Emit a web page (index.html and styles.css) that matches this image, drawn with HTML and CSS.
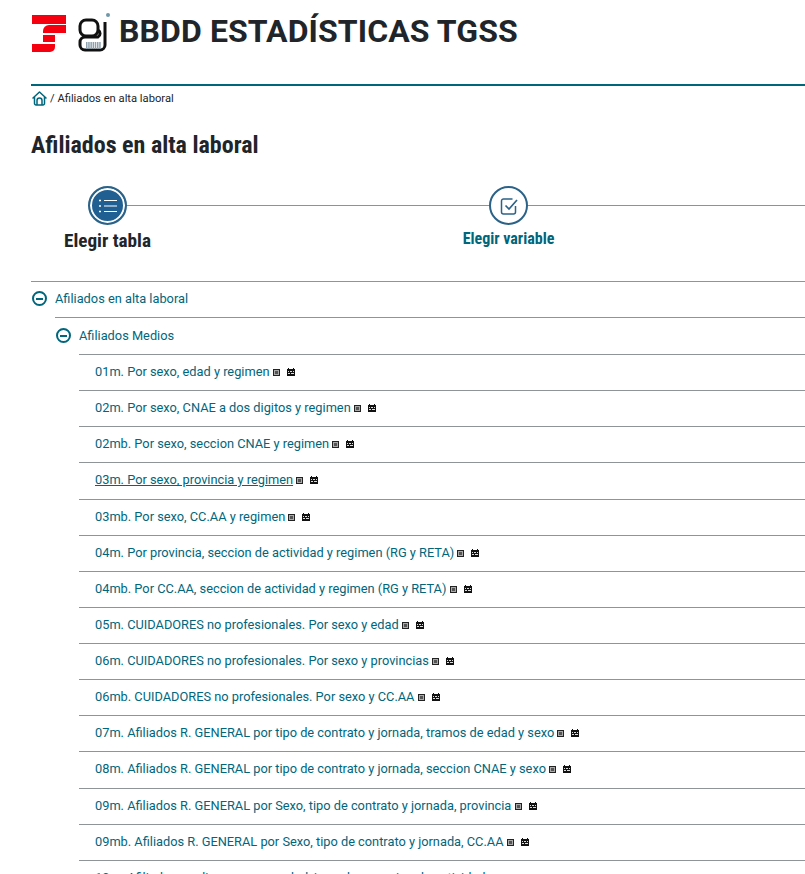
FILE: index.html
```html
<!DOCTYPE html>
<html lang="es">

<head>
  <meta charset="UTF-8">
  <meta name="viewport" content="width=device-width, initial-scale=1.0">
  <title>BBDD Estadísticas TGSS</title>
  <link rel="stylesheet" href="styles.css">
</head>

<body>
  <header class="site-header">
    <svg class="logo-ss" width="34" height="37" viewBox="0 0 34 37">
      <path fill="#f5000f" d="M0 0h34v9H0z"/>
      <path fill="#f5000f" d="M17 10h17v8H11v-2a6 6 0 0 1 6-6z"/>
      <path fill="#f5000f" d="M11 20h12v7H11z"/>
      <path fill="#f5000f" d="M0 29h23v3a5 5 0 0 1-5 5H0z"/>
    </svg>
    <svg class="logo-gi" width="32" height="40" viewBox="0 0 32 40">
      <circle cx="30" cy="3" r="2" fill="#6f97aa"/>
      <path fill="none" stroke="#111" stroke-width="3" d="M27 10v23a5 5 0 0 1-5 5H7a5 5 0 0 1-5-5v-3a5 5 0 0 1 5-5h13a4 4 0 0 0 0-7"/>
      <path fill="none" stroke="#111" stroke-width="3" d="M8 8h6a6 6 0 0 1 6 6v4a6 6 0 0 1-6 6H8a6 6 0 0 1-6-6v-4a6 6 0 0 1 6-6z"/>
      <path stroke="#8ea0ac" stroke-width="7" stroke-dasharray="1.5 .7" d="M8 33.500h15"/>
    </svg>
    <h1 class="site-title">BBDD ESTADÍSTICAS TGSS</h1>
  </header>

  <nav class="breadcrumb">
    <svg class="home-icon" width="15" height="15" viewBox="0 0 15 15">
      <path fill="none" stroke="#00667c" stroke-width="1.5" stroke-linejoin="round" stroke-linecap="round" d="M1 7 7.500 1 14 7M2.500 6v6.500a1.500 1.500 0 0 0 1.500 1.500h7a1.500 1.500 0 0 0 1.500-1.500V6M5 14V9.500a2.500 2.500 0 0 1 5 0V14"/>
    </svg>
    <span>/ Afiliados en alta laboral</span>
  </nav>

  <h2 class="page-title">Afiliados en alta laboral</h2>

  <div class="steps">
    <div class="step step-active">
      <span class="step-circle">
        <svg width="18" height="14" viewBox="0 0 18 14">
          <path fill="none" stroke="#fff" stroke-width="1.2" d="M5 1.500h13M5 7h13M5 12.500h13"/>
          <path fill="none" stroke="#fff" stroke-width="1.600" d="M0 1.500h2M0 7h2M0 12.500h2"/>
        </svg>
      </span>
      <span class="step-label">Elegir tabla</span>
    </div>
    <div class="step">
      <span class="step-circle">
        <svg width="18" height="18" viewBox="0 0 18 18">
          <path fill="none" stroke="#2b6288" stroke-width="1.500" d="M15.500 9v6a2 2 0 0 1-2 2h-10a2 2 0 0 1-2-2V4a2 2 0 0 1 2-2h9"/>
          <path fill="none" stroke="#2b6288" stroke-width="1.700" d="M5.500 8.500 9 12l8-9"/>
        </svg>
      </span>
      <span class="step-label">Elegir variable</span>
    </div>
  </div>

  <ul class="tree">
    <li class="row">
      <span class="toggle"></span>Afiliados en alta laboral
      <ul class="tree level-2">
        <li class="row">
          <span class="toggle"></span>Afiliados Medios
          <ul class="tree level-3" id="tables"></ul>
        </li>
      </ul>
    </li>
  </ul>

  <script>
    var tables = [
      '01m. Por sexo, edad y regimen',
      '02m. Por sexo, CNAE a dos digitos y regimen',
      '02mb. Por sexo, seccion CNAE y regimen',
      '03m. Por sexo, provincia y regimen',
      '03mb. Por sexo, CC.AA y regimen',
      '04m. Por provincia, seccion de actividad y regimen (RG y RETA)',
      '04mb. Por CC.AA, seccion de actividad y regimen (RG y RETA)',
      '05m. CUIDADORES no profesionales. Por sexo y edad',
      '06m. CUIDADORES no profesionales. Por sexo y provincias',
      '06mb. CUIDADORES no profesionales. Por sexo y CC.AA',
      '07m. Afiliados R. GENERAL por tipo de contrato y jornada, tramos de edad y sexo',
      '08m. Afiliados R. GENERAL por tipo de contrato y jornada, seccion CNAE y sexo',
      '09m. Afiliados R. GENERAL por Sexo, tipo de contrato y jornada, provincia',
      '09mb. Afiliados R. GENERAL por Sexo, tipo de contrato y jornada, CC.AA',
      '10m. Afiliados medios por sexo, edad, jornada y seccion de actividad'
    ];

    var tableIcon = '<svg class="mini-icon" width="7" height="7" viewBox="0 0 7 7"><path fill="#222" d="M0 0h7v7H0z"/><path fill="#aaa" d="M1 1h5v5H1z"/><path fill="#555" d="M2 2h3v3H2z"/></svg>';
    var calIcon = '<svg class="mini-icon" width="8" height="8" viewBox="0 0 8 8"><path fill="#111" d="M1 0h1v1h4V0h1v1h1v7H0V1h1z"/><path fill="#ddd" d="M1 3h1v1H1zM3 3h2v1H3zM6 3h1v1H6zM1 5h2v1H1zM4 5h3v1H4z"/></svg>';

    var list = document.getElementById('tables');
    tables.forEach(function (name, i) {
      var li = document.createElement('li');
      li.className = 'row table-row';
      var cls = i == 3 ? 'table-link current' : 'table-link';
      li.innerHTML = '<a class="' + cls + '">' + name + '</a> ' + tableIcon + calIcon;
      list.appendChild(li);
    });
  </script>
</body>

</html>
```

FILE: styles.css
```css
html, body {
  height: 874px;
  overflow: hidden;
}

body {
  margin: 0;
  padding-left: 31px;
  font-family: Roboto, Arial, sans-serif;
  color: #212529;
  background-color: #fff;
}

ul {
  list-style: none;
  margin: 0;
  padding: 0;
}

.site-header {
  display: flex;
  align-items: flex-start;
  height: 84px;
  border-bottom: 2px solid #00667c;
}

.logo-ss {
  margin-top: 15px;
  margin-left: 1px;
}

.logo-gi {
  margin-top: 12px;
  margin-left: 12px;
}

.site-title {
  margin: 11px 0 0 9px;
  font-size: 32px;
  line-height: 40px;
  font-weight: 700;
  letter-spacing: 0.1px;
}

.breadcrumb {
  display: flex;
  align-items: center;
  gap: 3px;
  height: 25px;
  padding-left: 1px;
  font-size: 11.2px;
}

.page-title {
  margin: 19px 0 0;
  font-family: "Roboto Condensed", Roboto, Arial, sans-serif;
  font-size: 24px;
  line-height: 30px;
  font-weight: 700;
}

.steps {
  display: flex;
  margin-top: 26px;
  height: 95px;
  padding-left: 33px;
  background: linear-gradient(#8a929a, #8a929a) 76px 19px / 100% 1px no-repeat;
}

.step {
  display: flex;
  flex-direction: column;
  align-items: center;
  width: 87px;
  margin-right: 314px;
}

.step-circle {
  display: flex;
  align-items: center;
  justify-content: center;
  box-sizing: border-box;
  width: 39px;
  height: 39px;
  border: 2px solid #2b6288;
  border-radius: 50%;
  background-color: #fff;
}

.step-active .step-circle {
  background-color: #205f92;
  box-shadow: inset 0 0 0 2px #fff;
}

.step-label {
  margin-top: 5px;
  font-family: "Roboto Condensed", Roboto, Arial, sans-serif;
  font-size: 16px;
  line-height: 18px;
  font-weight: 700;
  white-space: nowrap;
  color: #00667c;
}

.step-active .step-label {
  margin-top: 5px;
  font-size: 19.2px;
  line-height: 22px;
  color: #212529;
}

.tree {
  font-size: 12.8px;
  color: #00667c;
}

.row {
  border-top: 1px solid #8f9499;
  line-height: 16px;
  padding-top: 9px;
}

.level-2 > .row {
  padding-top: 10px;
}

.toggle {
  display: inline-block;
  box-sizing: border-box;
  position: relative;
  width: 15px;
  height: 15px;
  margin-left: 1px;
  margin-right: 8px;
  vertical-align: -3px;
  border: 2px solid #00667c;
  border-radius: 50%;
}

.toggle::after {
  content: "";
  position: absolute;
  left: 2px;
  right: 2px;
  top: 4.500px;
  height: 2px;
  background-color: #00667c;
}

.level-2 {
  margin-top: 10px;
  margin-left: 24px;
}

.level-3 {
  margin-top: 10px;
  margin-left: 24px;
}

.table-row {
  height: 26.14px;
  padding-left: 16px;
}

.table-link.current {
  text-decoration: underline;
}

.mini-icon {
  margin-right: 7px;
  vertical-align: 0;
}
```
